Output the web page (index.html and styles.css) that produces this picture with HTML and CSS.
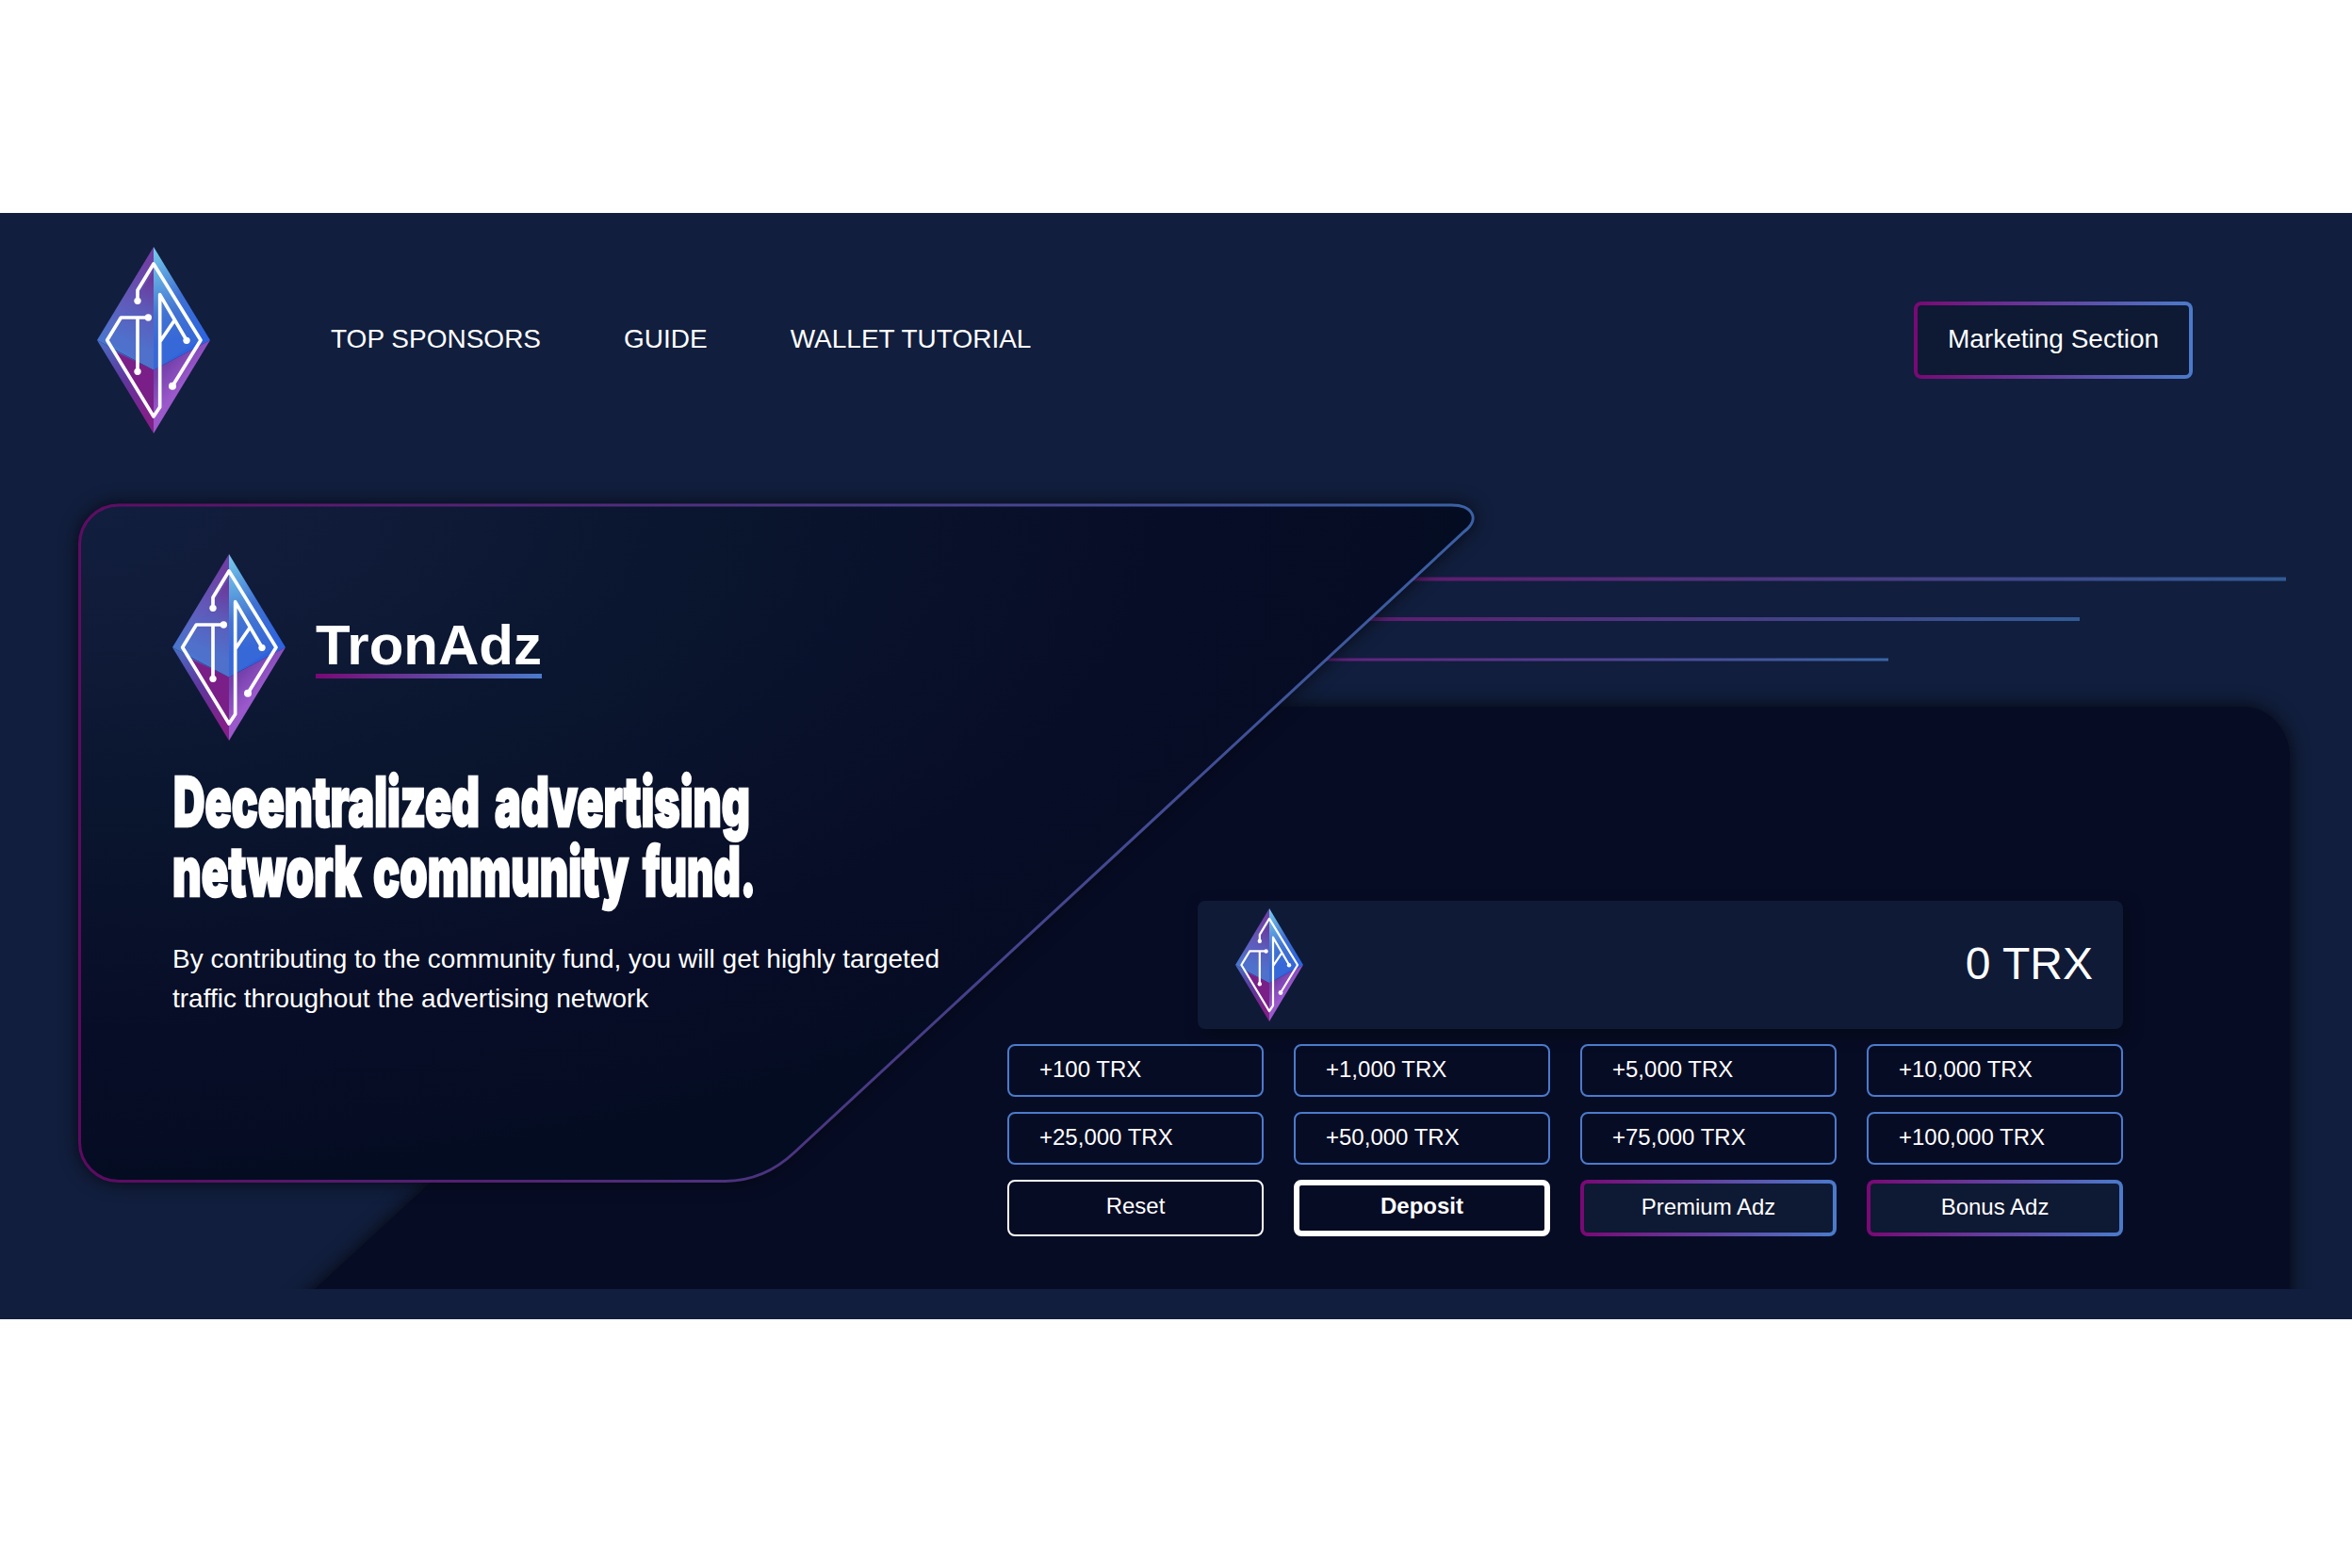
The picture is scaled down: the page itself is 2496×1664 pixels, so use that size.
FILE: index.html
```html
<!DOCTYPE html>
<html lang="en">
<head>
<meta charset="utf-8">
<title>TronAdz</title>
<link rel="stylesheet" href="styles.css">
</head>
<body>
<svg class="defs" width="0" height="0" aria-hidden="true">
  <defs>
    <linearGradient id="face-tl" gradientUnits="userSpaceOnUse" x1="180" y1="60" x2="60" y2="330"><stop offset="0" stop-color="#6f3fa4"/><stop offset=".5" stop-color="#5f5cbb"/><stop offset="1" stop-color="#4878d0"/></linearGradient>
    <linearGradient id="core-tl" gradientUnits="userSpaceOnUse" x1="185" y1="110" x2="100" y2="300"><stop offset="0" stop-color="#6b3a9c"/><stop offset=".5" stop-color="#5c5cba"/><stop offset="1" stop-color="#4f70cb"/></linearGradient>
    <linearGradient id="face-tr" gradientUnits="userSpaceOnUse" x1="180" y1="20" x2="330" y2="300"><stop offset="0" stop-color="#72c6ea"/><stop offset=".5" stop-color="#3f70d3"/><stop offset="1" stop-color="#2d63de"/></linearGradient>
    <linearGradient id="core-tr" gradientUnits="userSpaceOnUse" x1="180" y1="80" x2="230" y2="300"><stop offset="0" stop-color="#68b4e4"/><stop offset=".6" stop-color="#4274d2"/><stop offset="1" stop-color="#3768d8"/></linearGradient>
    <linearGradient id="face-bl" gradientUnits="userSpaceOnUse" x1="10" y1="300" x2="150" y2="540"><stop offset="0" stop-color="#4a6cc4"/><stop offset=".5" stop-color="#5f389f"/><stop offset="1" stop-color="#82208a"/></linearGradient>
    <linearGradient id="face-br" gradientUnits="userSpaceOnUse" x1="225" y1="370" x2="285" y2="425"><stop offset="0" stop-color="#7440ab"/><stop offset="1" stop-color="#9a58cb"/></linearGradient>
    <symbol id="gem" viewBox="0 0 360 594" preserveAspectRatio="none">
      <path d="M180 0L0 297 180 392z" fill="url(#face-tl)"/>
      <path d="M180 80L32 297l148 95z" fill="url(#core-tl)"/>
      <path d="M180 0l180 297-180 95z" fill="url(#face-tr)"/>
      <path d="M180 60L325 297l-145 95z" fill="url(#core-tr)"/>
      <path d="M0 297l180 297V392z" fill="url(#face-bl)"/>
      <path d="M62 336l118 204V392z" fill="#7a1f87"/>
      <path d="M360 297L180 594V392z" fill="url(#face-br)"/>
      <g fill="none" stroke="#fff" stroke-width="11" stroke-linejoin="round">
        <path d="M129 172v-34l51-84 150 243-90 146"/>
        <path d="M163 225H76l-44 72 148 243 20-30V152l85 145M129 225v172M248 232l-48 70"/>
      </g>
      <g fill="#fff"><circle cx="129" cy="172" r="11"/><circle cx="163" cy="225" r="11"/><circle cx="129" cy="397" r="11"/><circle cx="285" cy="298" r="11"/><circle cx="240" cy="443" r="12"/></g>
    </symbol>
  </defs>
</svg>

<main class="page">
  <svg class="backdrop" viewBox="0 0 2496 1174" aria-hidden="true">
    <defs>
      <linearGradient id="edge" gradientUnits="userSpaceOnUse" x1="84" y1="0" x2="1563" y2="0"><stop offset="0" stop-color="#7a0874"/><stop offset="1" stop-color="#4b7bcf"/></linearGradient>
      <linearGradient id="ray1" gradientUnits="userSpaceOnUse" x1="1440" y1="0" x2="2426" y2="0"><stop offset="0" stop-color="#63186d"/><stop offset="1" stop-color="#315b96"/></linearGradient>
      <linearGradient id="ray2" gradientUnits="userSpaceOnUse" x1="1390" y1="0" x2="2207" y2="0"><stop offset="0" stop-color="#63186d"/><stop offset="1" stop-color="#315b96"/></linearGradient>
      <linearGradient id="ray3" gradientUnits="userSpaceOnUse" x1="1340" y1="0" x2="2004" y2="0"><stop offset="0" stop-color="#6a1878"/><stop offset="1" stop-color="#3965a8"/></linearGradient>
      <radialGradient id="card-fill" cx="0" cy="0" r="1"><stop offset="0" stop-color="#111e3d"/><stop offset=".2" stop-color="#101b39"/><stop offset=".42" stop-color="#0a162f"/><stop offset=".78" stop-color="#080d27"/><stop offset="1" stop-color="#040c22"/></radialGradient>
      <filter id="soft" filterUnits="userSpaceOnUse" x="0" y="250" width="2496" height="924" color-interpolation-filters="sRGB"><feDropShadow dx="0" dy="0" stdDeviation="10" flood-color="#04060d" flood-opacity="1"/></filter>
      <clipPath id="floor"><path d="M0 0h2496v1142H0z"/></clipPath>
    </defs>
    <g clip-path="url(#floor)"><path filter="url(#soft)" fill="#070c25" d="M306 1168L1006 524H2380A50 54 0 0 1 2430 578V1180H296z"/></g>
    <path d="M1440 386.500h986v4h-986z" fill="url(#ray1)"/>
    <path d="M1390 429h817v4h-817z" fill="url(#ray2)"/>
    <path d="M1340 472.500h664v3h-664z" fill="url(#ray3)"/>
    <path filter="url(#soft)" fill="url(#card-fill)" d="M126 310H1540C1563 310 1571 325 1554 338L843 997Q811 1027 770 1027.500H126A41.500 41.500 0 0 1 84.500 986V351.500A41.500 41.500 0 0 1 126 310z"/>
    <path fill="none" stroke="url(#edge)" stroke-width="3" opacity=".75" d="M126 310H1540C1563 310 1571 325 1554 338L843 997Q811 1027 770 1027.500H126A41.500 41.500 0 0 1 84.500 986V351.500A41.500 41.500 0 0 1 126 310z"/>
  </svg>

  <header class="topbar">
    <svg class="gem"><use href="#gem"/></svg>
    <nav class="menu"><a>TOP SPONSORS</a><a>GUIDE</a><a>WALLET TUTORIAL</a></nav>
    <a class="btn gradient marketing">Marketing Section</a>
  </header>

  <section class="hero">
    <div class="intro">
      <div class="brand">
        <svg class="gem"><use href="#gem"/></svg>
        <h1 class="brand-name">TronAdz</h1>
      </div>
      <h2 class="headline">
        <svg class="headline-text" width="640" height="160" viewBox="0 0 640 160">
          <text x="1" y="65" textLength="325" lengthAdjust="spacingAndGlyphs">Decentralized</text>
          <text x="342" y="65" textLength="271" lengthAdjust="spacingAndGlyphs">advertising</text>
          <text x="0" y="139" textLength="200" lengthAdjust="spacingAndGlyphs">network</text>
          <text x="213" y="139" textLength="271" lengthAdjust="spacingAndGlyphs">community</text>
          <text x="499" y="139" textLength="120" lengthAdjust="spacingAndGlyphs">fund.</text>
        </svg>
      </h2>
      <p class="lead">By contributing to the community fund, you will get highly targeted<br>traffic throughout the advertising network</p>
    </div>
    <div class="fund">
      <div class="balance"><svg class="gem small"><use href="#gem"/></svg><span>0 TRX</span></div>
      <div class="amounts">
        <a class="btn">+100 TRX</a><a class="btn">+1,000 TRX</a><a class="btn">+5,000 TRX</a><a class="btn">+10,000 TRX</a>
        <a class="btn">+25,000 TRX</a><a class="btn">+50,000 TRX</a><a class="btn">+75,000 TRX</a><a class="btn">+100,000 TRX</a>
        <a class="btn action reset">Reset</a><a class="btn action deposit">Deposit</a><a class="btn action gradient">Premium Adz</a><a class="btn action gradient">Bonus Adz</a>
      </div>
    </div>
  </section>
</main>
</body>
</html>
```
FILE: styles.css
```css
* { box-sizing: border-box; }
body {
  margin: 0;
  padding-top: 226px;
  background: #fff;
  color: #fff;
  font-family: "Liberation Sans", Arial, sans-serif;
}
.defs { position: absolute; }
.page {
  position: relative;
  height: 1174px;
  background: #111e3d;
  overflow: hidden;
}
.backdrop {
  position: absolute;
  inset: 0;
  width: 2496px;
  height: 1174px;
}
.gem { display: block; flex: none; width: 120px; height: 198px; }
.gem.small { width: 72px; height: 120px; }

.topbar {
  position: relative;
  display: flex;
  align-items: center;
  padding: 36px 169px 0 103px;
}
.menu {
  display: flex;
  gap: 88px;
  margin-left: 128px;
  padding-bottom: 2px;
  font-size: 28px;
  line-height: 32px;
}
.btn {
  display: flex;
  align-items: center;
  height: 56px;
  padding: 0 32px 2px;
  border: 2px solid #4b7bcb;
  border-radius: 8px;
  font-size: 24px;
  line-height: 28px;
  white-space: nowrap;
}
.btn.gradient {
  border: 4px solid transparent;
  background:
    linear-gradient(#0e1933, #0e1933) padding-box,
    linear-gradient(90deg, #7a0874, #4b7bcb) border-box;
}
.btn.marketing {
  justify-content: center;
  width: 296px;
  height: 82px;
  margin-left: auto;
  font-size: 28px;
}

.hero {
  position: relative;
  display: grid;
  grid-template-columns: 886px 1184px;
  padding: 128px 0 0 183px;
}
.brand { display: flex; align-items: center; gap: 32px; }
.brand-name {
  margin: 0;
  padding-bottom: 5px;
  font-size: 60px;
  line-height: 60px;
  background: linear-gradient(90deg, #7a0874, #4b7bcb) bottom / 100% 5px no-repeat;
}
.headline { margin: 26px 0 0; height: 160px; }
.headline-text {
  display: block;
  overflow: visible;
  font-family: Inter, "Open Sans", sans-serif;
  font-size: 73px;
  font-weight: 900;
  fill: #fff;
  stroke: #fff;
  stroke-width: 2.5;
}
.lead { margin: 25px 0 0; font-size: 28px; line-height: 42px; }

.fund { padding-top: 368px; }
.balance {
  display: flex;
  align-items: center;
  justify-content: space-between;
  width: 982px;
  height: 136px;
  margin: 0 0 16px auto;
  padding: 0 32px 0 40px;
  border-radius: 8px;
  background: #0f1a37;
  box-shadow: 4px 6px 16px rgba(4, 8, 18, .7);
  font-size: 48px;
}
.balance span { padding-bottom: 3px; }
.amounts {
  display: grid;
  grid-template-columns: repeat(4, 272px);
  gap: 16px 32px;
}
.btn.action { justify-content: center; height: 60px; }
.btn.reset { border-color: #fff; padding-bottom: 5px; }
.btn.deposit { border: 6px solid #fff; padding-bottom: 5px; font-weight: 700; }
```
